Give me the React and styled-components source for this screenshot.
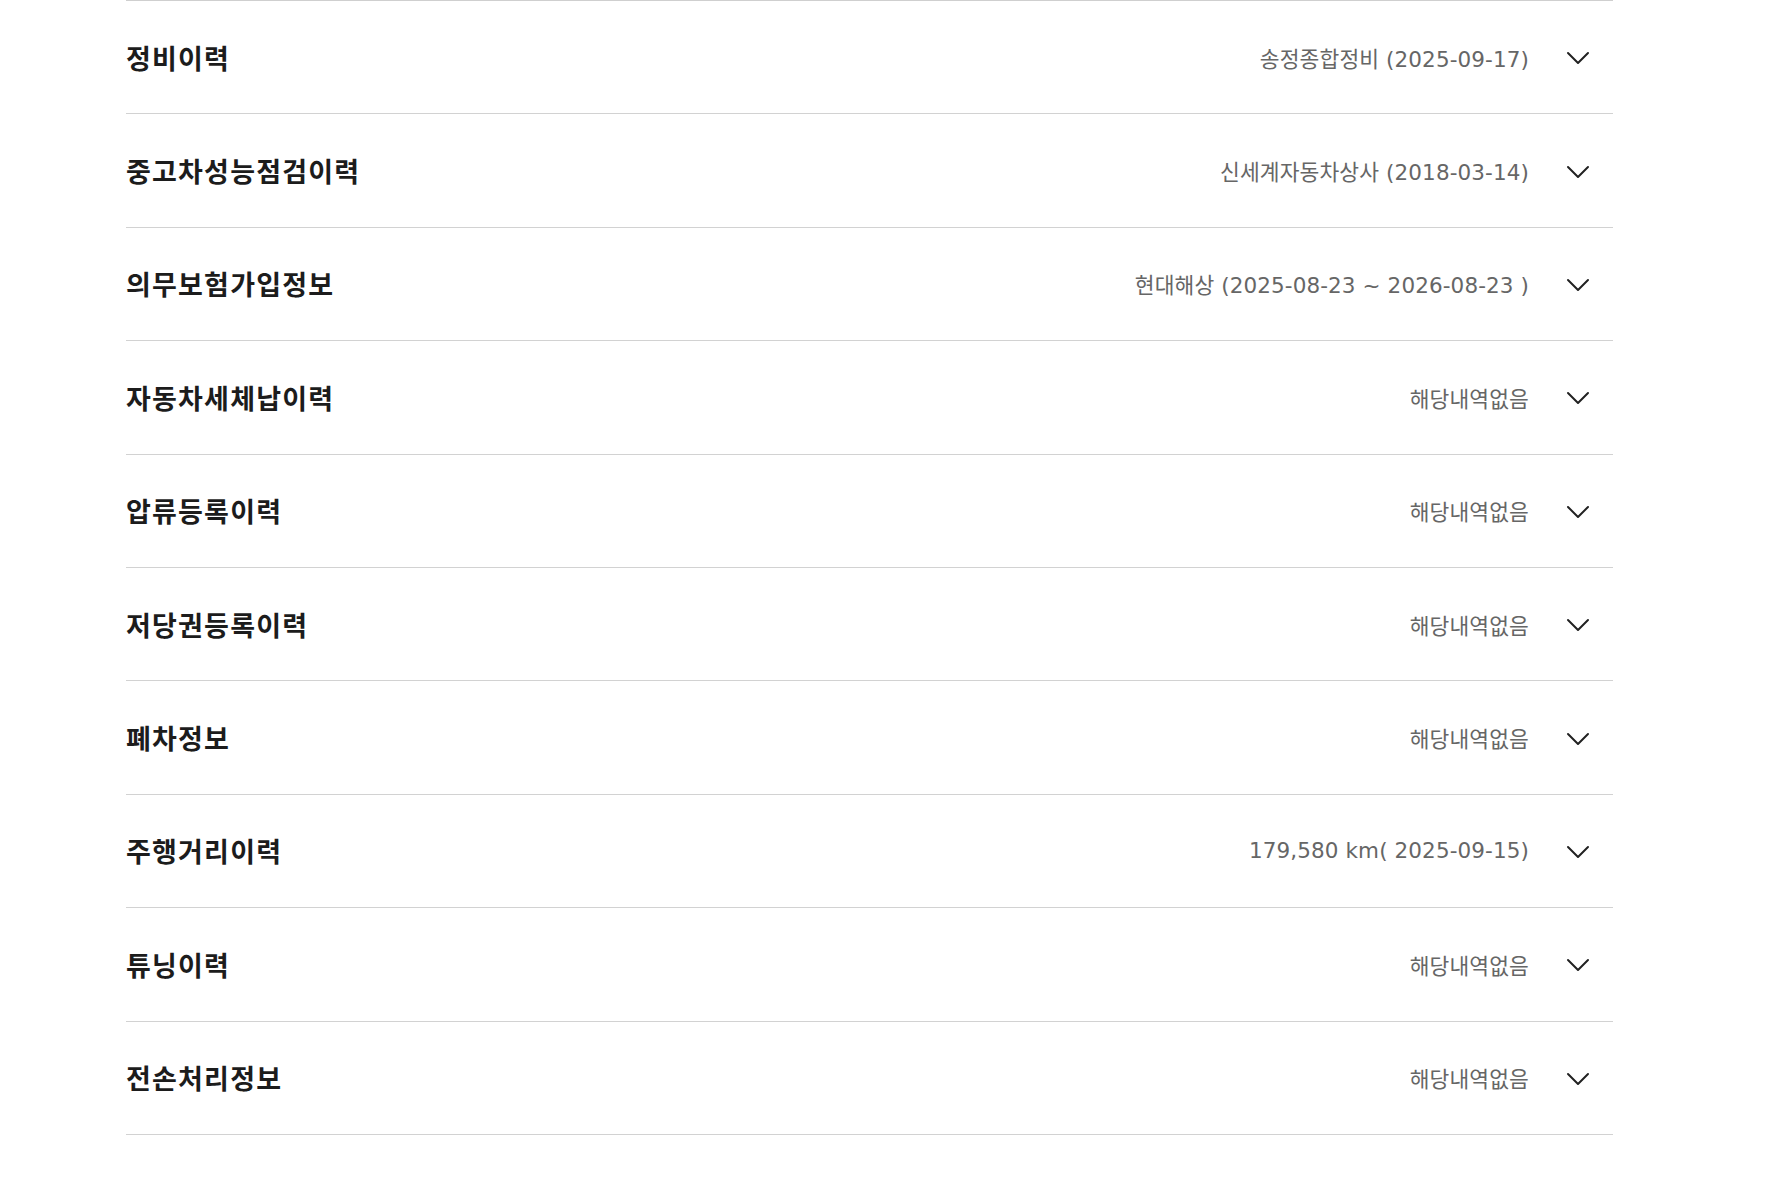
import React from 'react';
import styled, { createGlobalStyle } from 'styled-components';

const GlobalStyle = createGlobalStyle`
    html, body {
        margin: 0;
        padding: 0;
        background: #fff;
    }
    body {
        font-family: "Noto Sans CJK KR", "Noto Sans", sans-serif;
        color: #222;
    }
`;

const historyItems = [
    { title: '정비이력', value: '송정종합정비 (2025-09-17)' },
    { title: '중고차성능점검이력', value: '신세계자동차상사 (2018-03-14)' },
    { title: '의무보험가입정보', value: '현대해상 (2025-08-23 ~ 2026-08-23 )' },
    { title: '자동차세체납이력', value: '해당내역없음' },
    { title: '압류등록이력', value: '해당내역없음' },
    { title: '저당권등록이력', value: '해당내역없음' },
    { title: '폐차정보', value: '해당내역없음' },
    { title: '주행거리이력', value: '179,580 km( 2025-09-15)' },
    { title: '튜닝이력', value: '해당내역없음' },
    { title: '전손처리정보', value: '해당내역없음' },
];

function Chevron() {
    return (
        <ChevronIcon viewBox="0 0 24 24" fill="none">
            <path d="M2 8l10 10 10-10" stroke="#222" strokeWidth="2" strokeLinecap="round" strokeLinejoin="round" />
        </ChevronIcon>
    );
}

export default function App() {
    return (
        <>
            <GlobalStyle />
            <Page>
                <HistoryList>
                    {historyItems.map((item) => (
                        <HistoryRow key={item.title}>
                            <RowTitle>{item.title}</RowTitle>
                            <RowSummary>
                                <SummaryText>{item.value}</SummaryText>
                                <Chevron />
                            </RowSummary>
                        </HistoryRow>
                    ))}
                </HistoryList>
            </Page>
        </>
    );
}

const Page = styled.div`
    width: 100%;
    height: 1200px;
    padding: 0 152px 0 126px;
    box-sizing: border-box;
`;

const HistoryList = styled.ul`
    list-style: none;
    margin: 0;
    padding: 0;
    border-top: 1px solid #cfcfcf;
`;

const HistoryRow = styled.li`
    height: 113.4px;
    box-sizing: border-box;
    display: flex;
    align-items: center;
    justify-content: space-between;
    border-bottom: 1px solid #d2d2d2;
    padding: 0 23px 0 0;
    cursor: pointer;
`;

const RowTitle = styled.h3`
    margin: 0;
    font-size: 27px;
    font-weight: 700;
    color: #1c1c1c;
    letter-spacing: 1.2px;
`;

const RowSummary = styled.div`
    display: flex;
    align-items: center;
    gap: 37px;
`;

const SummaryText = styled.span`
    font-family: "DejaVu Sans", "Noto Sans CJK KR", sans-serif;
    font-size: 21.5px;
    color: #666;
    letter-spacing: 0.1px;
`;

const ChevronIcon = styled.svg`
    width: 24px;
    height: 24px;
    flex-shrink: 0;
`;
